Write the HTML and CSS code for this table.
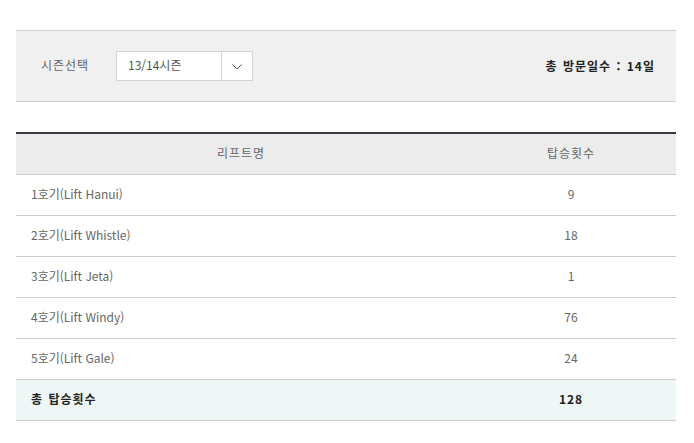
FILE: index.html
```html
<!DOCTYPE html>
<html lang="ko">
<head>
<meta charset="utf-8">
<link rel="stylesheet" href="styles.css">
</head>
<body>
<div class="wrap">
  <div class="panel">
    <div class="season">
      <span class="label">시즌선택</span>
      <div class="select">
        <span class="value">13/14시즌</span>
        <span class="arrow"><svg width="10" height="6" viewBox="0 0 10 6"><path d="M0.5 0.5 L5 5 L9.5 0.5" fill="none" stroke="#555" stroke-width="1"/></svg></span>
      </div>
    </div>
    <div class="total-days">총 방문일수 : 14일</div>
  </div>

  <table class="lifts">
    <thead>
      <tr><th class="c-name">리프트명</th><th class="c-count">탑승횟수</th></tr>
    </thead>
    <tbody>
      <tr><td class="name">1호기(Lift Hanui)</td><td class="count">9</td></tr>
      <tr><td class="name">2호기(Lift Whistle)</td><td class="count">18</td></tr>
      <tr><td class="name">3호기(Lift Jeta)</td><td class="count">1</td></tr>
      <tr><td class="name">4호기(Lift Windy)</td><td class="count">76</td></tr>
      <tr><td class="name">5호기(Lift Gale)</td><td class="count">24</td></tr>
      <tr class="sum"><td class="name">총 탑승횟수</td><td class="count">128</td></tr>
    </tbody>
  </table>
</div>
</body>
</html>
```
FILE: styles.css
```css
html, body {
  margin: 0;
  padding: 0;
  background: #fff;
}
body {
  font-family: "Noto Sans CJK KR", "Noto Sans", sans-serif;
  font-size: 12px;
  color: #666;
}
.wrap {
  width: 660px;
  margin-left: 16px;
  padding-top: 30px;
}
.panel {
  box-sizing: border-box;
  height: 72px;
  background: #f0f0f0;
  border-top: 1px solid #cfcfcf;
  border-bottom: 1px solid #cfcfcf;
  display: flex;
  align-items: center;
  justify-content: space-between;
  padding: 0 21px 0 25px;
}
.season {
  display: flex;
  align-items: center;
  margin-top: -1px;
}
.label {
  color: #666;
  width: 75px;
  margin-top: -3px;
  letter-spacing: 1px;
}
.select {
  display: flex;
  box-sizing: border-box;
  width: 137px;
  height: 30px;
  background: #fff;
  border: 1px solid #d3d3d3;
}
.value {
  flex: 1;
  padding-left: 11px;
  line-height: 26px;
  color: #555;
  border-right: 1px solid #d3d3d3;
}
.arrow {
  width: 30px;
  display: flex;
  align-items: center;
  justify-content: center;
  padding-top: 2px;
}
.total-days {
  font-weight: bold;
  color: #222;
  font-size: 12px;
  letter-spacing: 1px;
  word-spacing: 1px;
  margin-top: -2px;
}
.lifts {
  margin-top: 30px;
  width: 660px;
  border-collapse: collapse;
  border-top: 2px solid #3b3b46;
}
.lifts th {
  box-sizing: border-box;
  height: 41px;
  padding: 0 0 3px;
  background: #ececec;
  font-weight: normal;
  color: #666;
  letter-spacing: 1px;
  border-bottom: 1px solid #cccccc;
}
.c-name { width: 450px; }
.lifts td {
  box-sizing: border-box;
  height: 41px;
  padding: 0 0 2px;
  border-bottom: 1px solid #cccccc;
  color: #666;
}
.lifts td.name {
  padding-left: 15px;
}
.lifts td.count {
  text-align: center;
}
.lifts tr.sum td {
  background: #eff7f6;
  font-weight: bold;
  color: #222;
  letter-spacing: 1px;
}
.lifts tr.sum td.name {
  word-spacing: 1px;
}
```
